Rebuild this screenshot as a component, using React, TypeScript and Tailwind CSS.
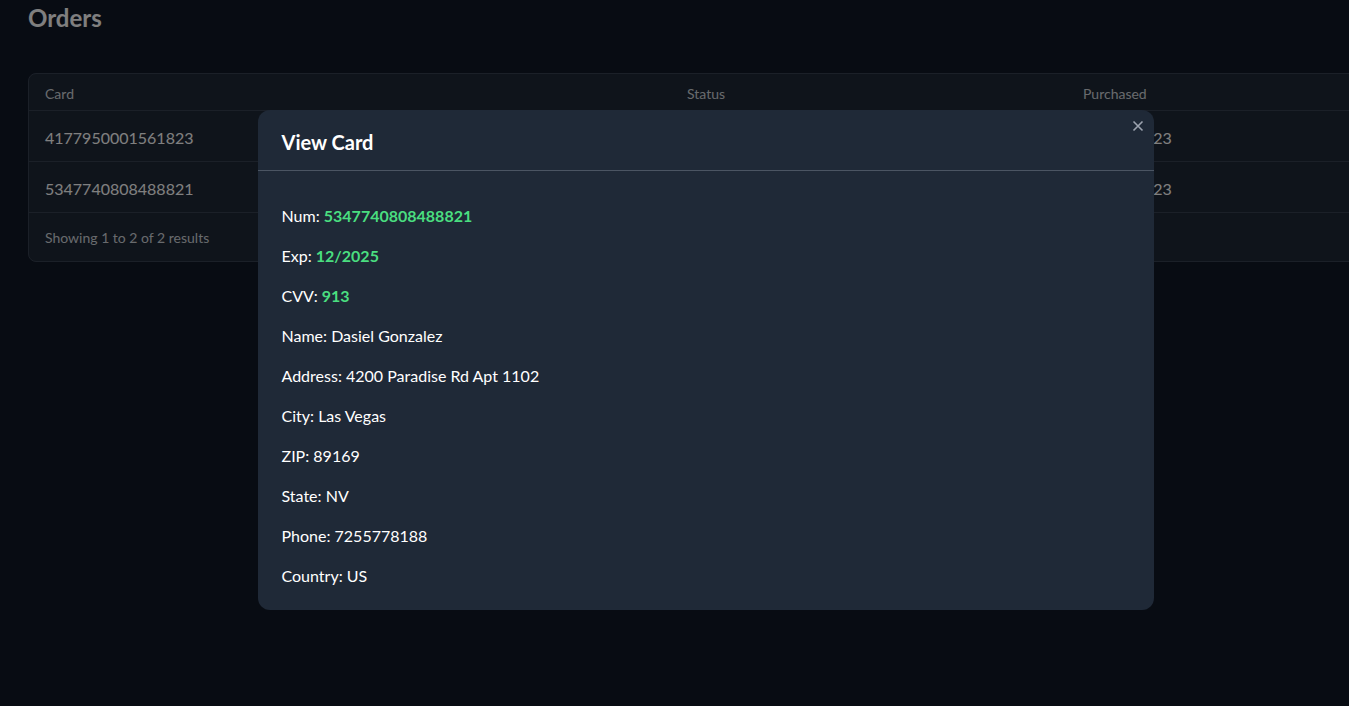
import React from "react";

interface Order {
  card: string;
  status: string;
  purchased: string;
}

const orders: Order[] = [
  { card: "4177950001561823", status: "Live", purchased: "11/18/2023" },
  { card: "5347740808488821", status: "Live", purchased: "11/18/2023" },
];

const details: { label: string; value: string; highlight?: boolean }[] = [
  { label: "Num", value: "5347740808488821", highlight: true },
  { label: "Exp", value: "12/2025", highlight: true },
  { label: "CVV", value: "913", highlight: true },
  { label: "Name", value: "Dasiel Gonzalez" },
  { label: "Address", value: "4200 Paradise Rd Apt 1102" },
  { label: "City", value: "Las Vegas" },
  { label: "ZIP", value: "89169" },
  { label: "State", value: "NV" },
  { label: "Phone", value: "7255778188" },
  { label: "Country", value: "US" },
];

const App: React.FC = () => {
  return (
    <div className="min-h-screen h-[706px] overflow-hidden bg-[#111827] text-white font-['Segoe_UI','Lato',sans-serif] relative">
      {/* Page */}
      <div className="pl-7">
        <h1 className="text-2xl font-bold leading-8 pt-[2px]">Orders</h1>

        <div className="mt-[39px] w-[1400px] rounded-lg border border-[#374151] bg-[#1f2937]">
          <table className="w-full table-fixed border-collapse text-left">
            <colgroup>
              <col className="w-[642px]" />
              <col className="w-[396px]" />
              <col />
            </colgroup>
            <thead>
              <tr className="border-b border-[#374151] text-sm text-[#d1d5db]">
                <th className="px-4 pt-[10px] pb-[6px] font-normal">Card</th>
                <th className="px-4 pt-[10px] pb-[6px] font-normal">Status</th>
                <th className="px-4 pt-[10px] pb-[6px] font-normal">Purchased</th>
              </tr>
            </thead>
            <tbody>
              {orders.map((o) => (
                <tr key={o.card} className="border-b border-[#374151] text-base">
                  <td className="px-4 pt-[15px] pb-[11px]">{o.card}</td>
                  <td className="px-4 pt-[15px] pb-[11px]">{o.status}</td>
                  <td className="px-4 pt-[15px] pb-[11px]">{o.purchased}</td>
                </tr>
              ))}
            </tbody>
          </table>
          <div className="px-4 pt-[15px] pb-[13px] text-sm text-[#d1d5db]">
            Showing 1 to 2 of 2 results
          </div>
        </div>
      </div>

      {/* Modal */}
      <div className="fixed inset-0 bg-black/50">
        <div className="mx-auto mt-[110px] w-[896px] translate-x-[31px] rounded-xl bg-[#1f2937] relative">
          <button className="absolute right-[10px] top-[10px] text-[#9ca3af]">
            <svg width="12" height="12" viewBox="0 0 12 12" fill="none" stroke="currentColor" strokeWidth="1.6">
              <path d="M1.5 1.5l9 9M10.5 1.5l-9 9" />
            </svg>
          </button>
          <div className="border-b border-[#4b5563] px-6 pt-[18px] pb-[14px]">
            <h2 className="text-xl font-bold leading-7">View Card</h2>
          </div>
          <div className="px-6 pt-[33px] pb-[22px]">
            {details.map((d, i) => (
              <p key={d.label} className={i === details.length - 1 ? "leading-6" : "leading-6 mb-4"}>
                {d.label}:{" "}
                {d.highlight ? (
                  <span className="font-bold text-[#4ade80]">{d.value}</span>
                ) : (
                  d.value
                )}
              </p>
            ))}
          </div>
        </div>
      </div>
    </div>
  );
};

export default App;
